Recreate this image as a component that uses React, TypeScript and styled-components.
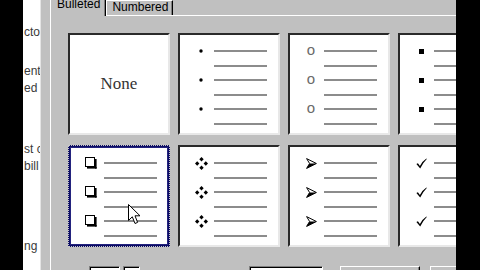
import React from "react";
import styled, { createGlobalStyle } from "styled-components";

const GlobalStyle = createGlobalStyle`
  html, body { margin: 0; padding: 0; background: #000; }
  body { width: 480px; height: 270px; overflow: hidden; font-family: "Liberation Sans", Arial, sans-serif; }
`;

const Root = styled.div`
  display: flex;
  width: 480px;
  height: 270px;
  overflow: hidden;
  background: #000;
`;

const BlackEdge = styled.div<{ $w: number }>`
  width: ${(p) => p.$w}px;
  flex: none;
  background: #000;
`;

const SideDoc = styled.div`
  width: 17px;
  flex: none;
  background: #fff;
  overflow: hidden;
  display: flex;
  flex-direction: column;
  padding-left: 1px;
  box-sizing: border-box;
`;

const DocGroup = styled.div<{ $mt: number }>`
  margin-top: ${(p) => p.$mt}px;
`;

const DocLine = styled.div`
  font: 12px/17px "Liberation Sans", Arial, sans-serif;
  color: #3a3a3a;
  white-space: nowrap;
`;

const FrameStrip = styled.div`
  width: 10px;
  flex: none;
  background: #c0c0c0;
  border-left: 1px solid #e4e4e4;
  box-sizing: border-box;
`;

const Dialog = styled.div`
  width: 406px;
  flex: none;
  display: flex;
  flex-direction: column;
  background: #c0c0c0;
  overflow: hidden;
`;

const TabRow = styled.div`
  display: flex;
  align-items: flex-end;
  height: 15px;
  flex: none;
`;

const Tab = styled.div<{ $active?: boolean }>`
  position: relative;
  box-sizing: border-box;
  font: 12px/12px "Liberation Sans", Arial, sans-serif;
  color: #000;
  background: #c0c0c0;
  border-top: 1px solid #fff;
  border-left: 1px solid #fff;
  border-right: 1px solid #000;
  box-shadow: inset -1px 0 #808080;
  white-space: nowrap;
  height: ${(p) => (p.$active ? 19 : 15)}px;
  margin-top: ${(p) => (p.$active ? -3 : 0)}px;
  margin-bottom: ${(p) => (p.$active ? -1 : 0)}px;
  padding: ${(p) => (p.$active ? "0 5px 0 6px" : "0 4px 0 5px")};
  z-index: ${(p) => (p.$active ? 2 : 1)};
`;

const Panel = styled.div`
  flex: 1;
  display: flex;
  flex-direction: column;
  border-top: 1px solid #fff;
  border-left: 1px solid #fff;
  padding: 17px 0 0 17px;
`;

const Grid = styled.div`
  display: grid;
  grid-template-columns: repeat(4, 102px);
  grid-auto-rows: 102px;
  column-gap: 8px;
  row-gap: 10px;
`;

const Box = styled.div<{ $selected?: boolean }>`
  position: relative;
  box-sizing: border-box;
  background: #fff;
  border: 2px solid;
  border-color: ${(p) =>
    p.$selected ? "#0c0c64" : "#2a2a2a #e8e8e8 #e8e8e8 #2a2a2a"};
  box-shadow: ${(p) => (p.$selected ? "inset 0 0 0 1px #23237e" : "none")};
  outline: ${(p) => (p.$selected ? "1px dotted #c8c8c8" : "none")};
  outline-offset: -1px;
  padding: 9px 0 0 14px;
  display: flex;
  flex-direction: column;
`;

const NoneBox = styled(Box)`
  padding: 0;
  align-items: center;
  justify-content: center;
`;

const NoneText = styled.span`
  font: 17px/20px "Liberation Serif", "Times New Roman", serif;
  color: #333;
`;

const Item = styled.div`
  display: flex;
  flex-direction: column;
  gap: 1px;
`;

const Row = styled.div`
  display: flex;
  align-items: center;
  height: 14px;
`;

const BulletCell = styled.div`
  width: 14px;
  height: 14px;
  flex: none;
  display: flex;
  align-items: center;
  justify-content: center;
`;

const Line = styled.div`
  width: 53px;
  height: 2px;
  margin-left: 6px;
  background: #8c8c8c;
`;

const RingGlyph = styled.span`
  font: 15px/14px "Liberation Sans", Arial, sans-serif;
  color: #6a6a6a;
  margin-top: -2px;
`;

const Cursor = styled.svg`
  position: absolute;
  left: 58px;
  top: 57px;
`;

const ControlsRow = styled.div`
  display: flex;
  align-items: flex-start;
  margin-top: 19px;
  padding-left: 21px;
  height: 23px;
  flex: none;
`;

const Field = styled.div<{ $w: number; $ml: number }>`
  box-sizing: border-box;
  width: ${(p) => p.$w}px;
  margin-left: ${(p) => p.$ml}px;
  height: 21px;
  flex: none;
  background: #fff;
  border: 1px solid;
  border-color: #808080 #fff #fff #808080;
  box-shadow: inset 1px 1px #000;
`;

const PushButton = styled.div<{ $w: number; $ml: number }>`
  box-sizing: border-box;
  width: ${(p) => p.$w}px;
  margin-left: ${(p) => p.$ml}px;
  height: 23px;
  flex: none;
  background: #c0c0c0;
  border: 1px solid;
  border-color: #fff #000 #000 #fff;
  box-shadow: inset -1px -1px #808080;
`;

const Dot = () => (
  <svg width="4" height="4" viewBox="0 0 4 4">
    <circle cx="2" cy="2" r="1.7" fill="#000" />
  </svg>
);

const Square = () => (
  <svg width="5" height="5" viewBox="0 0 5 5">
    <rect x="0" y="0" width="5" height="5" fill="#000" />
  </svg>
);

const Ring = () => <RingGlyph>o</RingGlyph>;

const CheckBoxGlyph = () => (
  <svg width="12" height="12" viewBox="0 0 12 12">
    <rect x="0.5" y="0.5" width="9" height="9" fill="none" stroke="#000" strokeWidth="1" />
    <rect x="10" y="2" width="1.6" height="9.6" fill="#000" />
    <rect x="2" y="10" width="9.6" height="1.6" fill="#000" />
  </svg>
);

const DiamondDots = () => {
  const d = (cx: number, cy: number) =>
    `M${cx} ${cy - 2.2} L${cx + 2.2} ${cy} L${cx} ${cy + 2.2} L${cx - 2.2} ${cy} Z`;
  return (
    <svg width="13" height="13" viewBox="0 0 13 13">
      <path d={`${d(6.5, 2.2)} ${d(2.2, 6.5)} ${d(10.8, 6.5)} ${d(6.5, 10.8)}`} fill="#000" />
    </svg>
  );
};

const Arrowhead = () => (
  <svg width="11" height="11" viewBox="0 0 11 11">
    <path d="M0.6 0.6 L10.4 5.5 L0.6 10.4 L3.6 5.5 Z" fill="none" stroke="#000" strokeWidth="1" strokeLinejoin="round" />
    <path d="M3.6 5.5 L10.4 5.5 L0.6 10.4 Z" fill="#000" />
  </svg>
);

const Check = () => (
  <svg width="11" height="11" viewBox="0 0 11 11">
    <path d="M0.4 6 L1.9 5.3 L3.9 7.9 Q6.4 3 10.4 0.4 L10.8 1 Q7.2 4.4 4.2 10.6 Z" fill="#000" />
  </svg>
);

const BulletList = ({ glyph }: { glyph: React.ReactNode }) => (
  <>
    {[0, 1, 2].map((i) => (
      <Item key={i}>
        <Row>
          <BulletCell>{glyph}</BulletCell>
          <Line />
        </Row>
        <Row>
          <BulletCell />
          <Line />
        </Row>
      </Item>
    ))}
  </>
);

export default function App() {
  return (
    <>
      <GlobalStyle />
      <Root>
        <BlackEdge $w={23} />
        <SideDoc>
          <DocGroup $mt={24}>
            <DocLine>ctor</DocLine>
          </DocGroup>
          <DocGroup $mt={22}>
            <DocLine>ent</DocLine>
            <DocLine>ed</DocLine>
          </DocGroup>
          <DocGroup $mt={44}>
            <DocLine>st co</DocLine>
            <DocLine>bill</DocLine>
          </DocGroup>
          <DocGroup $mt={63}>
            <DocLine>ng</DocLine>
          </DocGroup>
        </SideDoc>
        <FrameStrip />
        <Dialog>
          <TabRow>
            <Tab $active>Bulleted</Tab>
            <Tab>Numbered</Tab>
          </TabRow>
          <Panel>
            <Grid>
              <NoneBox>
                <NoneText>None</NoneText>
              </NoneBox>
              <Box>
                <BulletList glyph={<Dot />} />
              </Box>
              <Box>
                <BulletList glyph={<Ring />} />
              </Box>
              <Box>
                <BulletList glyph={<Square />} />
              </Box>
              <Box $selected>
                <BulletList glyph={<CheckBoxGlyph />} />
                <Cursor width="13" height="21" viewBox="0 0 13 21">
                  <path
                    d="M0.5 0.5 L0.5 16.5 L4.3 12.8 L7 19.5 L9.6 18.4 L7 11.8 L12 11.8 Z"
                    fill="#fff"
                    stroke="#000"
                    strokeWidth="1"
                    strokeLinejoin="miter"
                  />
                </Cursor>
              </Box>
              <Box>
                <BulletList glyph={<DiamondDots />} />
              </Box>
              <Box>
                <BulletList glyph={<Arrowhead />} />
              </Box>
              <Box>
                <BulletList glyph={<Check />} />
              </Box>
            </Grid>
            <ControlsRow>
              <Field $w={31} $ml={0} />
              <Field $w={17} $ml={3} />
              <Field $w={74} $ml={109} />
              <PushButton $w={80} $ml={17} />
              <PushButton $w={80} $ml={10} />
            </ControlsRow>
          </Panel>
        </Dialog>
        <BlackEdge $w={24} />
      </Root>
    </>
  );
}
